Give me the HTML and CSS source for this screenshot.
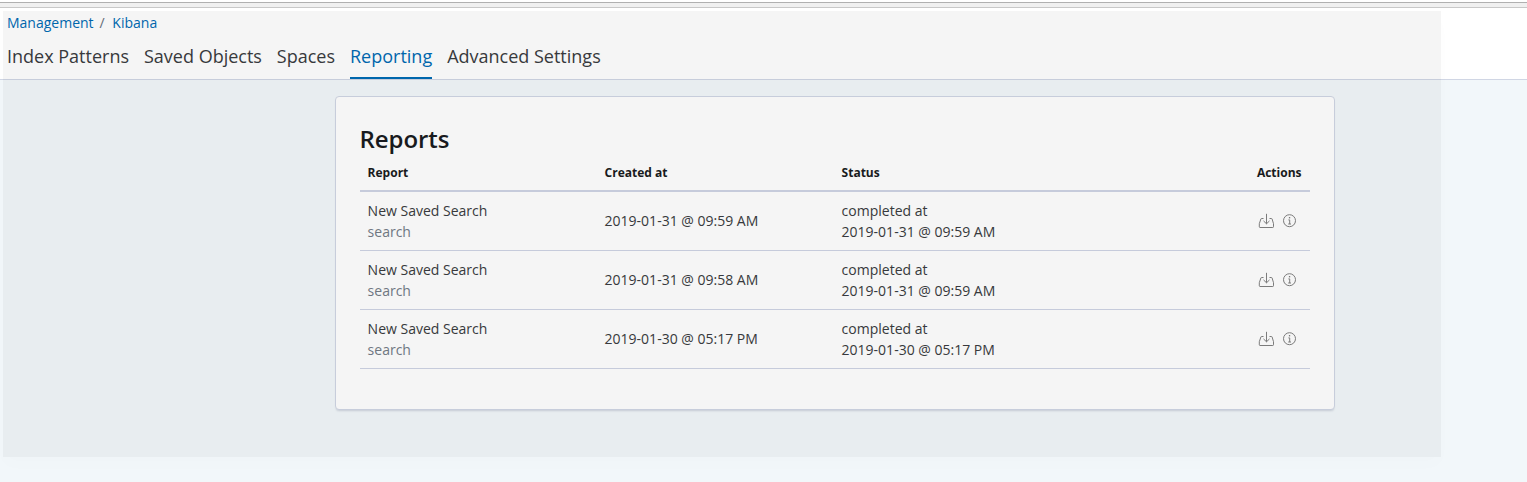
FILE: index.html
```html
<!DOCTYPE html>
<html lang="en">
<head>
<meta charset="utf-8">
<title>Kibana - Reporting</title>
<link rel="stylesheet" href="styles.css">
</head>
<body>
<svg class="sprite" aria-hidden="true">
  <symbol id="download" viewBox="0 0 16 16">
    <path d="M5.5 5.5H3.6a.7.7 0 0 0-.7.5L1.3 10.7v3.1c0 .4.3.7.7.7h12.8c.4 0 .7-.3.7-.7v-3.1L14.1 6a.7.7 0 0 0-.7-.5h-1.9M8.5 .8v10M5.5 7.9l3 2.9 3-2.9"/>
  </symbol>
  <symbol id="info" viewBox="0 0 14 14">
    <circle cx="7.5" cy="6.7" r="6"/>
    <path d="M6.4 5.9h1.3v4.1M6.2 10h2.8"/><path class="dot" d="M6.9 3h1.3v1.4H6.9z"/>
  </symbol>
</svg>
<div class="chrome"></div>
<header class="header">
  <nav class="crumbs"><a>Management</a><span class="slash">/</span><a>Kibana</a></nav>
  <nav class="tabs"><a class="tab">Index Patterns</a><a class="tab">Saved Objects</a><a class="tab">Spaces</a><a class="tab active">Reporting</a><a class="tab">Advanced Settings</a></nav>
</header>
<main class="main">
  <section class="panel">
    <h1 class="title">Reports</h1>
    <table class="table">
      <thead><tr><th class="col">Report</th><th class="col">Created at</th><th class="col">Status</th><th class="right">Actions</th></tr></thead>
      <tbody>
        <tr><td>New Saved Search<div class="subtle">search</div></td><td class="date">2019-01-31 @ 09:59 AM</td><td>completed at<div>2019-01-31 @ 09:59 AM</div></td><td><div class="actions"><svg class="dl"><use href="#download"/></svg><svg class="info"><use href="#info"/></svg></div></td></tr>
        <tr><td>New Saved Search<div class="subtle">search</div></td><td class="date">2019-01-31 @ 09:58 AM</td><td>completed at<div>2019-01-31 @ 09:59 AM</div></td><td><div class="actions"><svg class="dl"><use href="#download"/></svg><svg class="info"><use href="#info"/></svg></div></td></tr>
        <tr><td>New Saved Search<div class="subtle">search</div></td><td class="date">2019-01-30 @ 05:17 PM</td><td>completed at<div>2019-01-30 @ 05:17 PM</div></td><td><div class="actions"><svg class="dl"><use href="#download"/></svg><svg class="info"><use href="#info"/></svg></div></td></tr>
      </tbody>
    </table>
  </section>
</main>
<div class="shade"></div>
</body>
</html>
```
FILE: styles.css
```css
* { box-sizing: border-box; }
body {
  margin: 0;
  height: 482px;
  overflow: hidden;
  display: flex;
  flex-direction: column;
  position: relative;
  background: #f2f7fa;
  color: #3a3c40;
  font: 14px/21px "Open Sans", sans-serif;
}
.sprite { position: absolute; width: 0; height: 0; }
.chrome {
  height: 6px;
  margin-top: 2px;
  border-top: 1px solid #b0b0b0;
  border-bottom: 1px solid #c8c8c8;
  background: #f0f0f0;
  box-shadow: 0 -2px #fff;
  flex: none;
}
.header {
  height: 72px;
  flex: none;
  padding: 4px 7px 0;
  background: #fff;
  border-bottom: 1px solid #d0d6e4;
}
.crumbs { display: flex; height: 21px; color: #006bb4; }
.slash { margin: 0 7.6px 0 6px; color: #69707d; }
.tabs { display: flex; gap: 14.95px; height: 46px; font-size: 18px; }
.tab { height: 46px; line-height: 47px; }
.tab.active { color: #006bb4; border-bottom: 2px solid #006bb4; }
.main { padding: 16px 0 0 335px; }
.panel {
  width: 1000px;
  height: 314px;
  padding: 24px;
  background: #fff;
  border: 1px solid #d0d6e4;
  border-radius: 4px;
  box-shadow: 0 2px 2px -1px rgba(152, 162, 179, .4);
}
.title { margin: 0 0 1px -.5px; height: 35px; font-size: 24px; line-height: 35px; font-weight: 600; letter-spacing: -.05px; color: #1a1c21; }
.table { width: 950px; table-layout: fixed; border-collapse: separate; border-spacing: 0; }
.col { width: 237px; }
.table th {
  height: 35px;
  padding: 0 8px 1px 7.6px;
  border-bottom: 2px solid #cfd4e4;
  font-size: 12px;
  line-height: 18px;
  font-weight: 700;
  text-align: left;
  color: #1a1c21;
}
.table .right { text-align: right; padding-right: 8.5px; }
.table td { height: 59px; padding: 0 8px 0 7.6px; border-bottom: 1px solid #cfd4e4; vertical-align: middle; }
.table .date { padding-bottom: 1px; }
.subtle { color: #747c87; }
.actions { display: flex; justify-content: flex-end; align-items: center; gap: 8px; padding-right: 6px; }
.actions svg { fill: none; stroke: #808080; }
.dl { width: 16px; height: 16px; }
.info { width: 14px; height: 14px; }
.dot { fill: #808080; stroke: none; }
.shade {
  position: absolute;
  left: 3px;
  top: 11px;
  width: 1438px;
  height: 446px;
  background: rgba(0, 0, 0, .04);
  box-shadow: 0 8px 16px rgba(0, 0, 0, .012);
  pointer-events: none;
}
```
